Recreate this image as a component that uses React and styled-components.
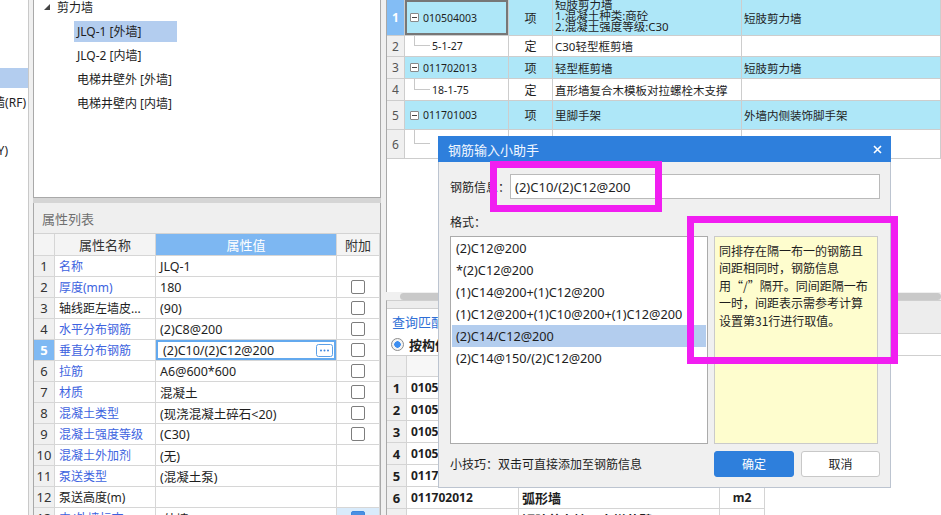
import React from "react";
import styled, { createGlobalStyle } from "styled-components";

const GlobalStyle = createGlobalStyle`
  html, body { margin: 0; padding: 0; background: #fff; }
  body {
    font-family: "Noto Sans", "Noto Sans CJK SC", sans-serif;
    font-size: 12px;
    color: #1e1e1e;
  }
  * { box-sizing: border-box; }
`;

const Screen = styled.div`
  position: relative;
  width: 941px;
  height: 515px;
  overflow: hidden;
  display: flex;
  background: #f0f0f0;
`;

/* ---------- far left strip ---------- */
const SideStrip = styled.div`
  width: 29px;
  flex-shrink: 0;
  background: #fff;
  border-right: 1px solid #c9c9c9;
  padding-top: 66px;
  display: flex;
  flex-direction: column;
  overflow: hidden;
`;

const SideRow = styled.div`
  height: 24px;
  display: flex;
  align-items: center;
  justify-content: flex-end;
  padding-right: ${({ $pad }) => $pad || 0}px;
  white-space: nowrap;
`;

const SideMark = styled.div`
  width: 100%;
  height: 20px;
  background: #b3cdef;
`;

/* ---------- left column ---------- */
const LeftColumn = styled.div`
  width: 357px;
  flex-shrink: 0;
  padding: 0 5px 0 4px;
  display: flex;
  flex-direction: column;
`;

const TreePanel = styled.div`
  height: 198px;
  flex-shrink: 0;
  background: #fff;
  border: 1px solid #a9a9a9;
  border-top: none;
  overflow: hidden;
`;

const TreeRow = styled.div`
  height: ${({ $h }) => $h || 24}px;
  padding-bottom: ${({ $pb }) => $pb || 0}px;
  padding-left: ${({ $indent }) => $indent}px;
  display: flex;
  align-items: center;
  font-size: 12px;
`;

const TreeArrow = styled.svg`
  width: 6px;
  height: 6px;
  margin-right: 7px;
`;

const TreeLabel = styled.span`
  display: inline-block;
  height: 21px;
  line-height: 21px;
  padding: 0 3px;
  background: ${({ $sel }) => ($sel ? "#b3cdef" : "transparent")};
  width: ${({ $sel }) => ($sel ? "103px" : "auto")};
`;

const Splitter = styled.div`
  height: 5px;
  flex-shrink: 0;
  background: #d5d5d5;
`;

const PropPanel = styled.div`
  flex: 1;
  background: #fff;
  border-left: 1px solid #a9a9a9;
  border-right: 1px solid #a9a9a9;
  overflow: hidden;
`;

const PropTitle = styled.div`
  height: 31px;
  background: #efefef;
  color: #6f6f6f;
  font-size: 13px;
  padding-left: 8px;
  display: flex;
  align-items: center;
  border-bottom: 1px solid #d3d3d3;
`;

const PropGrid = styled.div`
  display: grid;
  grid-template-columns: 21px 101px 181px 1fr;
  grid-template-rows: 22px;
  grid-auto-rows: 21px;
`;

const Cell = styled.div`
  border-right: 1px solid #d6d6d6;
  border-bottom: 1px solid #d6d6d6;
  display: flex;
  align-items: center;
  white-space: nowrap;
  overflow: hidden;
`;

const HeadCell = styled(Cell)`
  justify-content: center;
  font-size: 13px;
  background: ${({ $blue }) => ($blue ? "#7db7f2" : "#f4f4f4")};
  color: ${({ $blue }) => ($blue ? "#fff" : "#333")};
`;

const NumCell = styled(Cell)`
  justify-content: center;
  font-size: 13px;
  background: ${({ $active }) => ($active ? "#7fb9f3" : "#f0f0f0")};
  color: ${({ $active }) => ($active ? "#fff" : "#333")};
  font-weight: ${({ $active }) => ($active ? 700 : 400)};
`;

const NameCell = styled(Cell)`
  padding-left: 4px;
  font-size: 12px;
  color: ${({ $blue }) => ($blue ? "#3d63e0" : "#1e1e1e")};
`;

const ValueCell = styled(Cell)`
  padding: 0 3px 0 ${({ $active }) => ($active ? 7 : 4)}px;
  font-size: 12.5px;
  justify-content: space-between;
  box-shadow: ${({ $active }) => ($active ? "inset 0 0 0 2px #63a9ee" : "none")};
`;

const MoreButton = styled.svg`
  width: 17px;
  height: 13px;
  flex-shrink: 0;
`;

const AddCell = styled(Cell)`
  justify-content: center;
  background: ${({ $tint }) => ($tint ? "#d9ebfb" : "#fff")};
`;

const CheckBox = styled.span`
  width: 14px;
  height: 14px;
  border: 1px solid ${({ $blue }) => ($blue ? "#3c88df" : "#7d7d7d")};
  background: ${({ $blue }) => ($blue ? "#4a90e2" : "#fff")};
  border-radius: 2px;
`;

/* ---------- right column ---------- */
const RightColumn = styled.div`
  flex: 1;
  display: flex;
  flex-direction: column;
`;

const BillGrid = styled.div`
  height: 292px;
  flex-shrink: 0;
  background: #fff;
  border-left: 1px solid #a9a9a9;
  overflow: hidden;
`;

const BillRow = styled.div`
  display: grid;
  grid-template-columns: 18px 104px 44px 189px 1fr;
  height: ${({ $h }) => $h}px;
  background: ${({ $hl }) => ($hl ? "#aee7f8" : "#fff")};
`;

const BillCell = styled.div`
  border-right: 1px solid #cdcdcd;
  border-bottom: 1px solid #cdcdcd;
  display: flex;
  align-items: center;
  white-space: nowrap;
  overflow: hidden;
  font-size: 12px;
`;

const BillNum = styled(BillCell)`
  justify-content: center;
  font-size: 12px;
  background: ${({ $sel }) => ($sel ? "#83bdf5" : "#f0f0f0")};
  color: ${({ $sel }) => ($sel ? "#fff" : "#555")};
  font-weight: ${({ $sel }) => ($sel ? 700 : 400)};
`;

const CodeCell = styled(BillCell)`
  font-size: 10.5px;
  box-shadow: ${({ $sel }) => ($sel ? "inset 0 0 0 2px #777" : "none")};
`;

const ToggleBox = styled.span`
  position: relative;
  width: 9px;
  height: 9px;
  margin: 0 4px 0 5px;
  border: 1px solid #8a8a8a;
  border-radius: 1px;
  background: #fff;
  flex-shrink: 0;
  &::after {
    content: "";
    position: absolute;
    left: 1px;
    right: 1px;
    top: 3px;
    height: 1px;
    background: #444;
  }
`;

const Elbow = styled.span`
  align-self: flex-start;
  width: 16px;
  height: 50%;
  margin: 0 2px 0 9px;
  border-left: 1px solid #c8c8c8;
  border-bottom: 1px solid #c8c8c8;
  flex-shrink: 0;
`;

const KindCell = styled(BillCell)`
  justify-content: center;
`;

const BillName = styled(BillCell)`
  padding-left: 2px;
  font-size: 11.5px;
  flex-direction: column;
  align-items: flex-start;
  justify-content: ${({ $stack }) => ($stack ? "flex-start" : "center")};
  line-height: ${({ $stack }) => ($stack ? "11px" : "normal")};
  & > span:first-child {
    margin-top: ${({ $stack }) => ($stack ? "-1px" : "0")};
  }
`;

const FeatureCell = styled(BillCell)`
  padding-left: 2px;
  font-size: 11.5px;
`;

const HScroll = styled.div`
  height: 8px;
  flex-shrink: 0;
  padding: 1px 0 0 14px;
  background: #f0f0f0;
  display: flex;
`;

const Thumb = styled.div`
  flex: 1;
  height: 7px;
  border-radius: 4px;
  background: #c9c9c9;
`;

const QueryPanel = styled.div`
  flex: 1;
  background: #fff;
  border-left: 1px solid #a9a9a9;
  border-top: 1px solid #cfcfcf;
  overflow: hidden;
`;

const TabStrip = styled.div`
  height: 33px;
  padding-top: 7px;
  background: #ededed;
  border-bottom: 1px solid #cfcfcf;
  display: flex;
  align-items: flex-end;
`;

const Tab = styled.div`
  height: 26px;
  margin-bottom: -1px;
  padding: 0 6px 0 5px;
  background: #fff;
  border: 1px solid #cfcfcf;
  border-left: none;
  border-bottom: none;
  color: #2f6fd6;
  font-size: 13px;
  display: flex;
  align-items: center;
`;

const FilterBar = styled.div`
  height: 22px;
  padding-left: 4px;
  border-bottom: 1px solid #cfcfcf;
  display: flex;
  align-items: center;
  gap: 5px;
  font-size: 13px;
  font-weight: 700;
`;

const Radio = styled.span`
  width: 13px;
  height: 13px;
  border-radius: 50%;
  border: 1px solid #8c8c8c;
  background: radial-gradient(circle, #3d8ef0 0 3px, #f4f4f4 3.5px);
`;

const MatchGrid = styled.div`
  display: grid;
  grid-template-columns: 20px 112px 201px 45px;
  grid-template-rows: 21px;
  grid-auto-rows: 22px;
`;

const MatchCell = styled(Cell)`
  border-color: #d4d4d4;
  font-weight: 700;
  font-size: ${({ $size }) => $size || 12}px;
  padding-left: ${({ $pad }) => $pad || 0}px;
  justify-content: ${({ $center }) => ($center ? "center" : "flex-start")};
  background: ${({ $bg }) => $bg || "#fff"};
`;

/* ---------- dialog ---------- */
const Dialog = styled.div`
  position: absolute;
  left: 438px;
  top: 136px;
  width: 453px;
  height: 352px;
  background: #f0f0f0;
  border: 1px solid #bcc4d0;
  border-top: none;
  display: flex;
  flex-direction: column;
`;

const DialogTitle = styled.div`
  height: 26px;
  margin: 0 -1px;
  padding: 0 9px 0 10px;
  background: #2e7fdc;
  color: #f2f7ff;
  font-size: 13px;
  display: flex;
  align-items: center;
  justify-content: space-between;
`;

const DialogBody = styled.div`
  flex: 1;
  padding: 12px 10px 10px 11px;
  display: flex;
  flex-direction: column;
`;

const InfoRow = styled.div`
  height: 25px;
  display: flex;
  align-items: center;
`;

const FieldLabel = styled.span`
  width: 60px;
  flex-shrink: 0;
  font-size: 12px;
`;

const InfoInput = styled.div`
  flex: 1;
  height: 25px;
  background: #fff;
  border: 1px solid #bababa;
  padding-left: 4px;
  font-size: 13px;
  display: flex;
  align-items: center;
`;

const FormatLabel = styled.div`
  height: 16px;
  margin: 15px 0 6px;
  font-size: 12px;
  display: flex;
  align-items: center;
`;

const MainArea = styled.div`
  height: 208px;
  display: flex;
  gap: 6px;
`;

const FormatList = styled.div`
  width: 258px;
  background: #fff;
  border: 1px solid #ababab;
  padding: 0 1px;
`;

const FormatItem = styled.div`
  height: 22px;
  line-height: 22px;
  padding-left: 4px;
  font-size: 12.7px;
  background: ${({ $sel }) => ($sel ? "#b3cdee" : "transparent")};
`;

const TipBox = styled.div`
  width: 164px;
  background: #fefdce;
  border: 1px solid #cacaca;
  padding: 5px 4px;
  font-family: "Noto Sans CJK SC", sans-serif;
  font-size: 12px;
  line-height: 17.4px;
  white-space: nowrap;
`;

const Footer = styled.div`
  height: 26px;
  margin-top: 7px;
  display: flex;
  align-items: center;
`;

const Hint = styled.span`
  flex: 1;
  font-size: 12px;
`;

const DialogButton = styled.button`
  width: ${({ $primary }) => ($primary ? 80 : 79)}px;
  height: 26px;
  margin-left: ${({ $primary }) => ($primary ? 0 : 7)}px;
  border-radius: 3px;
  border: 1px solid ${({ $primary }) => ($primary ? "#2e7fdc" : "#c8c8c8")};
  background: ${({ $primary }) => ($primary ? "#2e7fdc" : "#fff")};
  color: ${({ $primary }) => ($primary ? "#fff" : "#1e1e1e")};
  font-family: inherit;
  font-size: 12px;
  padding: 0;
`;

const Annotation = styled.div`
  position: absolute;
  border: 7px solid #f11ef1;
  pointer-events: none;
`;

const props = [
  { n: "名称", v: "JLQ-1", blue: true },
  { n: "厚度(mm)", v: "180", blue: true, box: true },
  { n: "轴线距左墙皮...", v: "(90)", box: true },
  { n: "水平分布钢筋", v: "(2)C8@200", blue: true, box: true },
  { n: "垂直分布钢筋", v: "(2)C10/(2)C12@200", blue: true, box: true, active: true },
  { n: "拉筋", v: "A6@600*600", blue: true, box: true },
  { n: "材质", v: "混凝土", blue: true, box: true },
  { n: "混凝土类型", v: "(现浇混凝土碎石<20)", blue: true, box: true },
  { n: "混凝土强度等级", v: "(C30)", blue: true, box: true },
  { n: "混凝土外加剂", v: "(无)", blue: true },
  { n: "泵送类型", v: "(混凝土泵)", blue: true },
  { n: "泵送高度(m)", v: "" },
  { n: "内/外墙标志", v: "(外墙)", blue: true, box: true, tint: true },
];

const bills = [
  { h: 36, code: "010504003", kind: "项", name: ["短肢剪力墙", "1.混凝土种类:商砼", "2.混凝土强度等级:C30"], feat: "短肢剪力墙", parent: true, sel: true },
  { h: 21, code: "5-1-27", kind: "定", name: ["C30轻型框剪墙"], feat: "" },
  { h: 22, code: "011702013", kind: "项", name: ["轻型框剪墙"], feat: "短肢剪力墙", parent: true },
  { h: 22, code: "18-1-75", kind: "定", name: ["直形墙复合木模板对拉螺栓木支撑"], feat: "" },
  { h: 29, code: "011701003", kind: "项", name: ["里脚手架"], feat: "外墙内侧装饰脚手架", parent: true },
  { h: 29, code: "", kind: "定", name: ["里脚手架"], feat: "" },
];

const matches = [
  ["010504001", "直形墙", "m3"],
  ["010504002", "弧形墙", "m3"],
  ["010504003", "短肢剪力墙", "m3"],
  ["010504004", "挡土墙", "m3"],
  ["011702011", "直形墙", "m2"],
  ["011702012", "弧形墙", "m2"],
  ["011702013", "短肢剪力墙、电梯井壁", "m2"],
];

const formats = [
  "(2)C12@200",
  "*(2)C12@200",
  "(1)C14@200+(1)C12@200",
  "(1)C12@200+(1)C10@200+(1)C12@200",
  "(2)C14/C12@200",
  "(2)C14@150/(2)C12@200",
];

const tipLines = [
  "同排存在隔一布一的钢筋且",
  "间距相同时，钢筋信息",
  "用“/”隔开。同间距隔一布",
  "一时，间距表示需参考计算",
  "设置第31行进行取值。",
];

const App = () => {
  return (
    <Screen>
      <GlobalStyle />
      <SideStrip>
        <SideRow><SideMark /></SideRow>
        <SideRow $pad={2}>女儿墙(RF)</SideRow>
        <SideRow />
        <SideRow $pad={20}>(Y)</SideRow>
      </SideStrip>

      <LeftColumn>
        <TreePanel>
          <TreeRow $h={19} $pb={5} $indent={10}>
            <TreeArrow viewBox="0 0 6 6">
              <polygon points="6,0 6,6 0,6" fill="#444" />
            </TreeArrow>
            剪力墙
          </TreeRow>
          <TreeRow $indent={40}><TreeLabel $sel>JLQ-1 [外墙]</TreeLabel></TreeRow>
          <TreeRow $indent={40}><TreeLabel>JLQ-2 [内墙]</TreeLabel></TreeRow>
          <TreeRow $indent={40}><TreeLabel>电梯井壁外 [外墙]</TreeLabel></TreeRow>
          <TreeRow $indent={40}><TreeLabel>电梯井壁内 [内墙]</TreeLabel></TreeRow>
        </TreePanel>
        <Splitter />
        <PropPanel>
          <PropTitle>属性列表</PropTitle>
          <PropGrid>
            <HeadCell />
            <HeadCell>属性名称</HeadCell>
            <HeadCell $blue>属性值</HeadCell>
            <HeadCell>附加</HeadCell>
            {props.map((p, i) => (
              <React.Fragment key={i}>
                <NumCell $active={p.active}>{i + 1}</NumCell>
                <NameCell $blue={p.blue}>{p.n}</NameCell>
                <ValueCell $active={p.active}>
                  <span>{p.v}</span>
                  {p.active && (
                    <MoreButton viewBox="0 0 17 13">
                      <rect x="0.5" y="0.5" width="16" height="12" rx="2" fill="#fff" stroke="#5b9fe6" />
                      <circle cx="5" cy="6.5" r="1" fill="#3f86dc" />
                      <circle cx="8.5" cy="6.5" r="1" fill="#3f86dc" />
                      <circle cx="12" cy="6.5" r="1" fill="#3f86dc" />
                    </MoreButton>
                  )}
                </ValueCell>
                <AddCell $tint={p.tint}>{p.box && <CheckBox $blue={p.tint} />}</AddCell>
              </React.Fragment>
            ))}
          </PropGrid>
        </PropPanel>
      </LeftColumn>

      <RightColumn>
        <BillGrid>
          {bills.map((b, i) => (
            <BillRow key={i} $h={b.h} $hl={b.parent}>
              <BillNum $sel={b.sel}>{i + 1}</BillNum>
              <CodeCell $sel={b.sel}>
                {b.parent ? <ToggleBox /> : <Elbow />}
                {b.code}
              </CodeCell>
              <KindCell>{b.kind}</KindCell>
              <BillName $stack={b.name.length > 1}>
                {b.name.map((t) => <span key={t}>{t}</span>)}
              </BillName>
              <FeatureCell>{b.feat}</FeatureCell>
            </BillRow>
          ))}
        </BillGrid>
        <HScroll><Thumb /></HScroll>
        <QueryPanel>
          <TabStrip><Tab>查询匹配清单</Tab></TabStrip>
          <FilterBar><Radio />按构件类型过滤</FilterBar>
          <MatchGrid>
            <MatchCell $bg="#f0f0f0" />
            <MatchCell $bg="#f7f7f7" $center>编码</MatchCell>
            <MatchCell $bg="#f7f7f7" $center>名称</MatchCell>
            <MatchCell $bg="#f7f7f7" $center>单位</MatchCell>
            {matches.map((m, i) => (
              <React.Fragment key={m[0]}>
                <MatchCell $bg="#f0f0f0" $center $size={13}>{i + 1}</MatchCell>
                <MatchCell $pad={4}>{m[0]}</MatchCell>
                <MatchCell $pad={3} $size={13}>{m[1]}</MatchCell>
                <MatchCell $center>{m[2]}</MatchCell>
              </React.Fragment>
            ))}
          </MatchGrid>
        </QueryPanel>
      </RightColumn>

      <Dialog>
        <DialogTitle>
          钢筋输入小助手
          <svg width="9" height="9" viewBox="0 0 9 9">
            <path d="M1 1L8 8M8 1L1 8" stroke="#fff" strokeWidth="1.6" />
          </svg>
        </DialogTitle>
        <DialogBody>
          <InfoRow>
            <FieldLabel>钢筋信息：</FieldLabel>
            <InfoInput>(2)C10/(2)C12@200</InfoInput>
          </InfoRow>
          <FormatLabel>格式：</FormatLabel>
          <MainArea>
            <FormatList>
              {formats.map((f, i) => (
                <FormatItem key={f} $sel={i === 4}>{f}</FormatItem>
              ))}
            </FormatList>
            <TipBox>
              {tipLines.map((l) => <div key={l}>{l}</div>)}
            </TipBox>
          </MainArea>
          <Footer>
            <Hint>小技巧：双击可直接添加至钢筋信息</Hint>
            <DialogButton $primary>确定</DialogButton>
            <DialogButton>取消</DialogButton>
          </Footer>
        </DialogBody>
      </Dialog>

      <Annotation style={{ left: 490, top: 161, width: 172, height: 51 }} />
      <Annotation style={{ left: 687, top: 216, width: 211, height: 148 }} />
    </Screen>
  );
};

export default App;
